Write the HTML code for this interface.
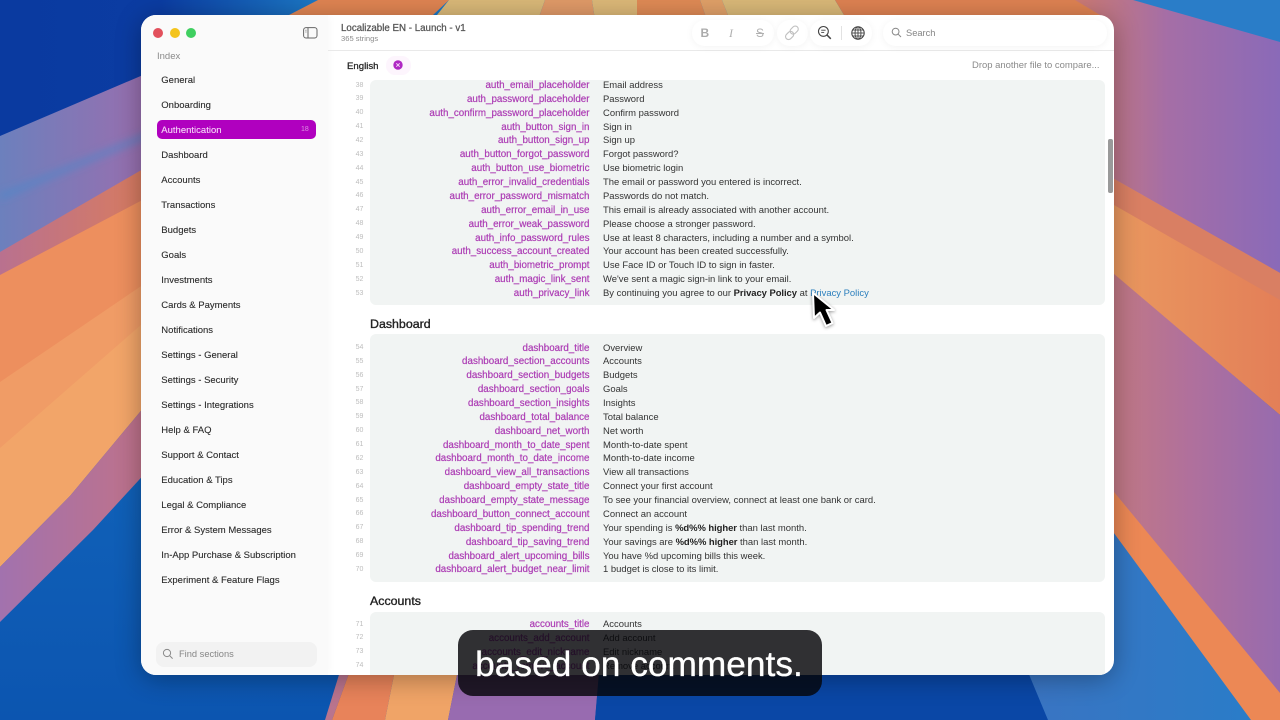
<!DOCTYPE html>
<html><head><meta charset="utf-8"><title>Localizable EN</title>
<style>
html,body{margin:0;padding:0;width:1280px;height:720px;overflow:hidden;background:#1272c4;font-family:"Liberation Sans",sans-serif}
#wp{position:absolute;left:0;top:0}
#win{position:absolute;left:141px;top:15px;width:973px;height:660px;background:#fff;border-radius:15px;overflow:hidden;box-shadow:0 4px 26px rgba(0,0,0,.32)}
#side{position:absolute;left:0;top:0;width:187px;height:660px;background:#fafafa;box-shadow:1px 0 8px rgba(0,0,0,.03)}
#inner{position:absolute;left:0;top:0;width:973px;height:660px;filter:blur(.3px)}
.abs{position:absolute}
.dot{position:absolute;top:13px;width:10px;height:10px;border-radius:50%}
.it{position:absolute;left:20.3px;margin-top:1px;font-size:9.5px;line-height:14px;color:#2a2a2a;white-space:nowrap;-webkit-text-stroke:.1px #2a2a2a}
#pill{position:absolute;left:16px;top:105px;width:159px;height:19px;background:#b000bf;border-radius:5px}
.card{position:absolute;left:229px;width:735px;background:#f1f4f3;border-radius:6px}
.r{position:absolute;left:0;margin-top:1px;height:14px;width:950px;font-size:9.45px;line-height:14px;white-space:nowrap}
.n{position:absolute;left:214px;width:9px;text-align:center;top:-.5px;font-size:7px;color:#bdbdbd}
.k{position:absolute;left:179px;width:269.5px;text-align:right;font-size:9.8px;color:#ac3cb4;-webkit-text-stroke:.2px #ac3cb4}
.v{position:absolute;left:462px;color:#333}
.v b{color:#222;letter-spacing:-.05px}
.h{position:absolute;left:229px;font-size:12.4px;line-height:16px;color:#222;-webkit-text-stroke:.35px #222}
.tp{position:absolute;background:#fff;border-radius:13px;box-shadow:0 1px 8px rgba(0,0,0,.05)}
#cap{position:absolute;left:458px;top:630px;width:362px;height:66px;padding-right:2px;border-radius:15px;background:rgba(5,5,8,.82);color:#fff;font-size:35.3px;line-height:70px;text-align:center;white-space:nowrap;-webkit-text-stroke:.3px #fff}
</style></head><body>
<svg id="wp" width="1280" height="720" viewBox="0 0 1280 720">
<defs>
<linearGradient id="g1" x1="0" x2="1" y1="0" y2="0"><stop offset="0" stop-color="#0a3aa0"/><stop offset=".5" stop-color="#0b3ca2"/><stop offset="1" stop-color="#1c78c4"/></linearGradient>
<linearGradient id="g2" x1="0" x2="1" y1="0" y2="0"><stop offset="0" stop-color="#6c80bd"/><stop offset="1" stop-color="#9a6eae"/></linearGradient>
<linearGradient id="g3" x1="0" x2="1" y1="0" y2="0"><stop offset="0" stop-color="#b9718f"/><stop offset="1" stop-color="#d97c5e"/></linearGradient>
<linearGradient id="g4" x1="0" x2="1" y1="0" y2="0"><stop offset="0" stop-color="#a272ae"/><stop offset="1" stop-color="#c07288"/></linearGradient>
<linearGradient id="g5" x1="0" x2="1" y1="0" y2="0"><stop offset="0" stop-color="#cc7a72"/><stop offset=".45" stop-color="#a56ea6"/><stop offset="1" stop-color="#8a6ab8"/></linearGradient>
<linearGradient id="g6" x1="0" x2="1" y1="0" y2="0"><stop offset="0" stop-color="#c47a80"/><stop offset=".5" stop-color="#b0709c"/><stop offset="1" stop-color="#976bae"/></linearGradient>
<linearGradient id="g7" x1="0" x2="1" y1="0" y2="0"><stop offset="0" stop-color="#ea9a60"/><stop offset="1" stop-color="#e37f58"/></linearGradient>
<linearGradient id="g8" x1="0" x2="0" y1="0" y2="1"><stop offset="0" stop-color="#1878c8"/><stop offset="1" stop-color="#0c55b0"/></linearGradient>
<linearGradient id="g9" x1="0" x2="1" y1="0" y2="0"><stop offset="0" stop-color="#3a74c2"/><stop offset="1" stop-color="#2a7cc8"/></linearGradient>
<filter id="bl" x="-20%" y="-100%" width="140%" height="300%"><feGaussianBlur stdDeviation="4"/></filter>
</defs>
<rect width="1280" height="720" fill="url(#g8)"/>
<polygon points="0,0 318,0 289,15 150,72 150,80 0,137" fill="url(#g1)"/>
<polygon points="0,136 150,72 150,172 0,253" fill="url(#g2)"/>
<polyline points="0,197 150,134" stroke="#4a88cc" stroke-opacity=".6" stroke-width="6" filter="url(#bl)" fill="none"/>
<polygon points="0,252 150,165 150,198 0,276" fill="url(#g3)"/>
<polygon points="0,275 150,196 150,281 0,383" fill="#ed8f5e"/>
<polygon points="0,382 150,280 150,318 0,449" fill="#f09c66"/>
<polygon points="0,448 150,317 150,400 70,496 0,567" fill="#f2a569"/>
<polygon points="0,567 70,496 150,400 150,468 93,530 0,622" fill="url(#g4)"/>
<!-- bottom -->
<polygon points="325,720 342,665 352,665 332,720" fill="#b9748e"/>
<polygon points="332,720 352,665 396,665 385,720" fill="#e8835a"/>
<polygon points="385,720 396,665 459,665 448,720" fill="#f0a467"/>
<polygon points="448,720 459,665 600,665 595,720" fill="#986bb0"/>
<polygon points="600,660 1023,660 1048,720 595,720" fill="#0a47a6"/>
<!-- top -->
<polygon points="318,0 449,0 433,15 433,20 289,20 289,15" fill="#df8452"/>
<polygon points="449,0 545,0 538,20 433,20" fill="#d9b878"/>
<polygon points="545,0 592,0 595,20 538,20" fill="#e09a68"/>
<polygon points="592,0 637,0 637,20 595,20" fill="#dcb878"/>
<polygon points="637,0 700,0 707,20 637,20" fill="#df8a55"/>
<polygon points="700,0 722,0 730,20 707,20" fill="#e0a068"/>
<polygon points="722,0 835,0 847,20 730,20" fill="#d9b878"/>
<polygon points="835,0 1085,0 1114,20 847,20" fill="#de8252"/>
<!-- right -->
<rect x="1100" y="0" width="180" height="60" fill="#2a7dc8"/>
<polygon points="1075,0 1133,0 1280,42 1280,275 1100,173 1100,15" fill="url(#g5)"/>
<polygon points="1100,171 1280,273 1280,415 1100,263" fill="url(#g7)"/>
<polygon points="1100,171 1280,273 1280,300 1100,197" fill="#d97f63"/>
<polygon points="1100,262 1280,415 1280,695 1100,477" fill="url(#g6)"/>
<polygon points="1100,475 1280,693 1280,720 1250,720 1100,515" fill="#ec8855"/>
<polygon points="1023,660 1100,660 1100,514 1251,720 1048,720" fill="url(#g9)"/>
</svg>

<div id="win">
<div id="inner">
<div id="side">
 <div class="dot" style="left:12px;background:#e2505c"></div>
 <div class="dot" style="left:28.5px;background:#f4c41c"></div>
 <div class="dot" style="left:44.5px;background:#3fcf60"></div>
 <svg class="abs" style="left:162px;top:12px" width="15" height="12" viewBox="0 0 15 12"><rect x=".6" y=".6" width="13.4" height="10.4" rx="2.4" fill="none" stroke="#666" stroke-width="1"/><line x1="5" y1="1" x2="5" y2="11" stroke="#666"/><line x1="2.2" y1="3.2" x2="3.6" y2="3.2" stroke="#888" stroke-width=".8"/><line x1="2.2" y1="5" x2="3.6" y2="5" stroke="#888" stroke-width=".8"/></svg>
 <div class="abs" style="left:16px;top:35px;font-size:9.5px;line-height:14px;color:#8a8a8a">Index</div>
 <div class="it" style="top:58px">General</div>
 <div class="it" style="top:83px">Onboarding</div>
 <div id="pill"></div>
 <div class="it" style="top:108px;color:#f6d6f8;-webkit-text-stroke:.1px #f6d6f8">Authentication</div>
 <div class="abs" style="left:160px;top:109px;font-size:7px;line-height:11px;color:#dd8fe2">18</div>
 <div class="it" style="top:133px">Dashboard</div>
 <div class="it" style="top:158px">Accounts</div>
 <div class="it" style="top:183px">Transactions</div>
 <div class="it" style="top:208px">Budgets</div>
 <div class="it" style="top:233px">Goals</div>
 <div class="it" style="top:258px">Investments</div>
 <div class="it" style="top:283px">Cards &amp; Payments</div>
 <div class="it" style="top:308px">Notifications</div>
 <div class="it" style="top:333px">Settings - General</div>
 <div class="it" style="top:358px">Settings - Security</div>
 <div class="it" style="top:383px">Settings - Integrations</div>
 <div class="it" style="top:408px">Help &amp; FAQ</div>
 <div class="it" style="top:433px">Support &amp; Contact</div>
 <div class="it" style="top:458px">Education &amp; Tips</div>
 <div class="it" style="top:483px">Legal &amp; Compliance</div>
 <div class="it" style="top:508px">Error &amp; System Messages</div>
 <div class="it" style="top:533px">In-App Purchase &amp; Subscription</div>
 <div class="it" style="top:558px">Experiment &amp; Feature Flags</div>
 <div class="abs" style="left:15px;top:627px;width:161px;height:25px;border-radius:8px;background:#f2f2f2"></div>
 <svg class="abs" style="left:21px;top:633px" width="12" height="12" viewBox="0 0 12 12"><circle cx="5" cy="5" r="3.6" fill="none" stroke="#888" stroke-width="1"/><line x1="7.7" y1="7.7" x2="10.6" y2="10.6" stroke="#888" stroke-width="1"/></svg>
 <div class="abs" style="left:38px;top:632px;font-size:9.3px;line-height:14px;color:#868686">Find sections</div>
</div>

<!-- header -->
<div class="abs" style="left:200px;top:7px;font-size:9.75px;line-height:13px;color:#555;-webkit-text-stroke:.25px #555;white-space:nowrap">Localizable EN - Launch - v1</div>
<div class="abs" style="left:200px;top:18px;font-size:7.6px;line-height:11px;color:#8c8c8c">365 strings</div>
<div class="abs" style="left:187px;top:35px;width:786px;height:1px;background:#e9e9e9"></div>

<div class="tp" style="left:551px;top:5px;width:82px;height:26px"></div>
<div class="tp" style="left:636px;top:5px;width:31px;height:26px"></div>
<div class="tp" style="left:669px;top:5px;width:62px;height:26px"></div>
<div class="tp" style="left:742px;top:5px;width:224px;height:26px"></div>
<div class="abs" style="left:559.5px;top:11px;font-size:12px;line-height:14px;font-weight:bold;color:#ababab">B</div>
<div class="abs" style="left:588px;top:11px;font-size:12px;line-height:14px;font-style:italic;font-family:'Liberation Serif',serif;color:#b0b0b0">I</div>
<div class="abs" style="left:615px;top:11px;font-size:12px;line-height:14px;color:#b0b0b0;text-decoration:line-through">S</div>
<svg class="abs" style="left:642px;top:9px" width="18" height="18" viewBox="0 0 18 18" fill="none" stroke="#c0c0c0" stroke-width="1.1"><rect x="8.2" y="1.6" width="6" height="9" rx="3" transform="rotate(45 11.2 6.1)"/><rect x="3.6" y="7" width="6" height="9" rx="3" transform="rotate(45 6.6 11.5)"/></svg>
<svg class="abs" style="left:676px;top:10px" width="15" height="15" viewBox="0 0 15 15" fill="none" stroke="#444"><circle cx="6.4" cy="6.4" r="4.9" stroke-width="1.1"/><line x1="10" y1="10" x2="13.8" y2="13.8" stroke-width="1.5"/><line x1="4.2" y1="5.2" x2="8.6" y2="5.2" stroke-width=".9"/><line x1="4.2" y1="7.4" x2="7.2" y2="7.4" stroke-width=".9"/></svg>
<div class="abs" style="left:700px;top:11px;width:1px;height:14px;background:#e2e2e2"></div>
<svg class="abs" style="left:710px;top:11px" width="14" height="14" viewBox="0 0 14 14" fill="none" stroke="#444" stroke-width=".9"><circle cx="7" cy="7" r="6.2" stroke-width="1.1"/><ellipse cx="7" cy="7" rx="3" ry="6.2"/><line x1="7" y1=".8" x2="7" y2="13.2"/><line x1=".8" y1="7" x2="13.2" y2="7"/><line x1="1.6" y1="4" x2="12.4" y2="4"/><line x1="1.6" y1="10" x2="12.4" y2="10"/></svg>
<svg class="abs" style="left:750px;top:12px" width="11" height="11" viewBox="0 0 11 11"><circle cx="4.6" cy="4.6" r="3.4" fill="none" stroke="#888" stroke-width="1"/><line x1="7.2" y1="7.2" x2="10" y2="10" stroke="#888" stroke-width="1"/></svg>
<div class="abs" style="left:765px;top:11px;font-size:9.3px;line-height:14px;color:#858585">Search</div>

<!-- lang row -->
<div class="abs" style="left:206px;top:44.5px;font-size:9.6px;line-height:14px;color:#222;-webkit-text-stroke:.25px #222">English</div>
<div class="abs" style="left:245px;top:41px;width:25px;height:19px;border-radius:9px;background:#fdf5fd"></div>
<svg class="abs" style="left:252px;top:45px" width="10" height="10" viewBox="0 0 10 10"><circle cx="5" cy="5" r="4.7" fill="#b028c4"/><path d="M3.3 3.3L6.7 6.7M6.7 3.3L3.3 6.7" stroke="#f4d8f8" stroke-width="1"/></svg>
<div class="abs" style="left:831px;top:44px;font-size:9.45px;line-height:14px;color:#8a8a8a;white-space:nowrap">Drop another file to compare...</div>

<!-- cards -->
<div class="card" style="top:65px;height:225px"></div>
<div class="h" style="top:300.7px">Dashboard</div>
<div class="card" style="top:319px;height:248px"></div>
<div class="h" style="top:577.8px">Accounts</div>
<div class="card" style="top:597px;height:80px"></div>

<div class="r" style="top:63px"><span class="n">38</span><span class="k">auth_email_placeholder</span><span class="v">Email address</span></div>
<div class="r" style="top:76.87px"><span class="n">39</span><span class="k">auth_password_placeholder</span><span class="v">Password</span></div>
<div class="r" style="top:90.74px"><span class="n">40</span><span class="k">auth_confirm_password_placeholder</span><span class="v">Confirm password</span></div>
<div class="r" style="top:104.61px"><span class="n">41</span><span class="k">auth_button_sign_in</span><span class="v">Sign in</span></div>
<div class="r" style="top:118.48px"><span class="n">42</span><span class="k">auth_button_sign_up</span><span class="v">Sign up</span></div>
<div class="r" style="top:132.35px"><span class="n">43</span><span class="k">auth_button_forgot_password</span><span class="v">Forgot password?</span></div>
<div class="r" style="top:146.22px"><span class="n">44</span><span class="k">auth_button_use_biometric</span><span class="v">Use biometric login</span></div>
<div class="r" style="top:160.09px"><span class="n">45</span><span class="k">auth_error_invalid_credentials</span><span class="v">The email or password you entered is incorrect.</span></div>
<div class="r" style="top:173.96px"><span class="n">46</span><span class="k">auth_error_password_mismatch</span><span class="v">Passwords do not match.</span></div>
<div class="r" style="top:187.83px"><span class="n">47</span><span class="k">auth_error_email_in_use</span><span class="v">This email is already associated with another account.</span></div>
<div class="r" style="top:201.7px"><span class="n">48</span><span class="k">auth_error_weak_password</span><span class="v">Please choose a stronger password.</span></div>
<div class="r" style="top:215.57px"><span class="n">49</span><span class="k">auth_info_password_rules</span><span class="v">Use at least 8 characters, including a number and a symbol.</span></div>
<div class="r" style="top:229.44px"><span class="n">50</span><span class="k">auth_success_account_created</span><span class="v">Your account has been created successfully.</span></div>
<div class="r" style="top:243.31px"><span class="n">51</span><span class="k">auth_biometric_prompt</span><span class="v">Use Face ID or Touch ID to sign in faster.</span></div>
<div class="r" style="top:257.18px"><span class="n">52</span><span class="k">auth_magic_link_sent</span><span class="v">We've sent a magic sign-in link to your email.</span></div>
<div class="r" style="top:271.05px"><span class="n">53</span><span class="k">auth_privacy_link</span><span class="v">By continuing you agree to our <b>Privacy Policy</b> at <span style="color:#2c7fbd">Privacy Policy</span></span></div>

<div class="r" style="top:325.5px"><span class="n">54</span><span class="k">dashboard_title</span><span class="v">Overview</span></div>
<div class="r" style="top:339.37px"><span class="n">55</span><span class="k">dashboard_section_accounts</span><span class="v">Accounts</span></div>
<div class="r" style="top:353.24px"><span class="n">56</span><span class="k">dashboard_section_budgets</span><span class="v">Budgets</span></div>
<div class="r" style="top:367.11px"><span class="n">57</span><span class="k">dashboard_section_goals</span><span class="v">Goals</span></div>
<div class="r" style="top:380.98px"><span class="n">58</span><span class="k">dashboard_section_insights</span><span class="v">Insights</span></div>
<div class="r" style="top:394.85px"><span class="n">59</span><span class="k">dashboard_total_balance</span><span class="v">Total balance</span></div>
<div class="r" style="top:408.72px"><span class="n">60</span><span class="k">dashboard_net_worth</span><span class="v">Net worth</span></div>
<div class="r" style="top:422.59px"><span class="n">61</span><span class="k">dashboard_month_to_date_spent</span><span class="v">Month-to-date spent</span></div>
<div class="r" style="top:436.46px"><span class="n">62</span><span class="k">dashboard_month_to_date_income</span><span class="v">Month-to-date income</span></div>
<div class="r" style="top:450.33px"><span class="n">63</span><span class="k">dashboard_view_all_transactions</span><span class="v">View all transactions</span></div>
<div class="r" style="top:464.2px"><span class="n">64</span><span class="k">dashboard_empty_state_title</span><span class="v">Connect your first account</span></div>
<div class="r" style="top:478.07px"><span class="n">65</span><span class="k">dashboard_empty_state_message</span><span class="v">To see your financial overview, connect at least one bank or card.</span></div>
<div class="r" style="top:491.94px"><span class="n">66</span><span class="k">dashboard_button_connect_account</span><span class="v">Connect an account</span></div>
<div class="r" style="top:505.81px"><span class="n">67</span><span class="k">dashboard_tip_spending_trend</span><span class="v">Your spending is <b>%d%% higher</b> than last month.</span></div>
<div class="r" style="top:519.68px"><span class="n">68</span><span class="k">dashboard_tip_saving_trend</span><span class="v">Your savings are <b>%d%% higher</b> than last month.</span></div>
<div class="r" style="top:533.55px"><span class="n">69</span><span class="k">dashboard_alert_upcoming_bills</span><span class="v">You have %d upcoming bills this week.</span></div>
<div class="r" style="top:547.42px"><span class="n">70</span><span class="k">dashboard_alert_budget_near_limit</span><span class="v">1 budget is close to its limit.</span></div>

<div class="r" style="top:602px"><span class="n">71</span><span class="k">accounts_title</span><span class="v">Accounts</span></div>
<div class="r" style="top:615.87px"><span class="n">72</span><span class="k">accounts_add_account</span><span class="v">Add account</span></div>
<div class="r" style="top:629.74px"><span class="n">73</span><span class="k">accounts_edit_nickname</span><span class="v">Edit nickname</span></div>
<div class="r" style="top:643.61px"><span class="n">74</span><span class="k">accounts_remove_account</span><span class="v">Remove account</span></div>

<!-- scrollbar -->
<div class="abs" style="left:967px;top:124px;width:4.5px;height:54px;border-radius:2px;background:#9a9a9a"></div>
</div>
</div>

<svg class="abs" style="left:806px;top:286px;filter:drop-shadow(0 1px 1.5px rgba(0,0,0,.4))" width="36" height="48" viewBox="0 0 36 48">
<path d="M7 7L8 32L14 26.5L20 40L26.5 37L20.5 24L28 24Z" fill="#000" stroke="#fff" stroke-width="2" stroke-linejoin="round"/>
</svg>

<div id="cap">based on comments.</div>
</body></html>
